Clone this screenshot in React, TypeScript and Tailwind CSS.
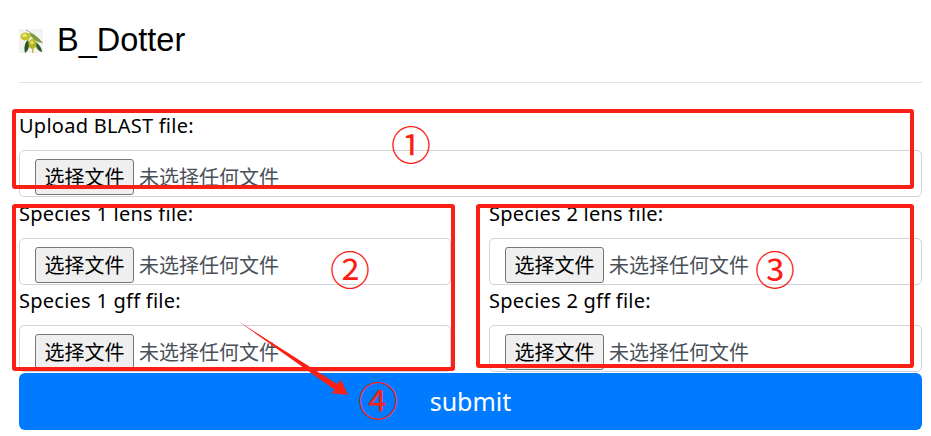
const cjk = "font-['Noto_Sans_CJK_SC',sans-serif]";

function OliveIcon() {
  return (
    <svg width="24" height="24" viewBox="0 0 24 24" className="shrink-0">
      <rect width="24" height="24" fill="#f3f3f1" />
      <path d="M7 1 C11 3 18 8 24 14" stroke="#8a8f6a" strokeWidth="0.8" fill="none" />
      <path d="M10 4 C15 4 20 9 23 14 C17 13 12 9 10 4Z" fill="#7f9c3c" />
      <path d="M9 11 C5 14 5 20 6 24 C10 21 11 16 9 11Z" fill="#2a5420" />
      <path d="M17 13 C21 16 23 20 23 23 C19 22 16 18 17 13Z" fill="#2f5a26" />
      <ellipse cx="6.5" cy="7.5" rx="5" ry="4" fill="#c2c42a" />
      <ellipse cx="5.5" cy="6.5" rx="2.2" ry="1.5" fill="#ecea80" />
      <ellipse cx="13.5" cy="15" rx="4" ry="5" fill="#b3b224" />
      <ellipse cx="13" cy="13.5" rx="1.8" ry="2" fill="#e2df6c" />
      <rect x="13" y="20" width="1.5" height="4" fill="#c9b84a" />
    </svg>
  );
}

function FileField({ label }: { label: string }) {
  return (
    <div>
      <div className="mb-[9px] h-[30px] text-[20px] leading-[30px] tracking-[0.25px] text-black">{label}</div>
      <div className="h-[47px] rounded-[5px] border border-[#ced4da] bg-white pl-[15px] pt-[8px]">
        <div className={`flex items-center text-[20px] ${cjk}`}>
          <div className="flex h-[36px] w-[99px] items-center justify-center rounded-[3px] border border-[#767676] bg-[#efefef] text-black">
            选择文件
          </div>
          <span className="ml-[5px] text-[#495057]">未选择任何文件</span>
        </div>
      </div>
    </div>
  );
}

function Note({ n, className }: { n: string; className: string }) {
  return (
    <span className={`absolute flex h-[40px] w-[40px] items-center justify-center text-[40px] leading-none text-[#fa2015] ${cjk} ${className}`}>
      {n}
    </span>
  );
}

export default function App() {
  return (
    <div className="relative h-[436px] w-[931px] overflow-hidden bg-white font-['Noto_Sans',sans-serif]">
      <div className="pl-[19px] pr-[9px]">
        <header className="flex h-[83px] items-center border-b border-[#dee2e6] pb-[1px]">
          <OliveIcon />
          <h1 className="ml-[14px] font-['Liberation_Sans',sans-serif] text-[32.5px] font-normal leading-none text-black">
            B_Dotter
          </h1>
        </header>

        <form className="mt-[28px]">
          <FileField label="Upload BLAST file:" />
          <div className="mt-[2px] grid grid-cols-[432px_433px] gap-x-[38px]">
            <div className="space-y-[1px]">
              <FileField label="Species 1 lens file:" />
              <FileField label="Species 1 gff file:" />
            </div>
            <div className="space-y-[1px]">
              <FileField label="Species 2 lens file:" />
              <FileField label="Species 2 gff file:" />
            </div>
          </div>
          <button
            type="button"
            className="mt-[1px] block h-[57px] w-full rounded-[6px] bg-[#007bff] text-[25px] text-white"
          >
            submit
          </button>
        </form>
      </div>

      {/* red markup drawn on top of the page */}
      <div className="absolute left-[12px] top-[109px] h-[80px] w-[902px] rounded-[3px] border-4 border-[#fa2015]" />
      <div className="absolute left-[12px] top-[204px] h-[167px] w-[443px] rounded-[3px] border-4 border-[#fa2015]" />
      <div className="absolute left-[476px] top-[204px] h-[164px] w-[438px] rounded-[3px] border-4 border-[#fa2015]" />
      <Note n="①" className="left-[391px] top-[123px]" />
      <Note n="②" className="left-[330px] top-[248px]" />
      <Note n="③" className="left-[755px] top-[248px]" />
      <Note n="④" className="left-[358px] top-[379px]" />
      <svg className="absolute left-0 top-0" width="931" height="436">
        <polygon points="238,321 337,384 341,380 348,395 331,393 335,390" fill="#fa2015" />
      </svg>
    </div>
  );
}
